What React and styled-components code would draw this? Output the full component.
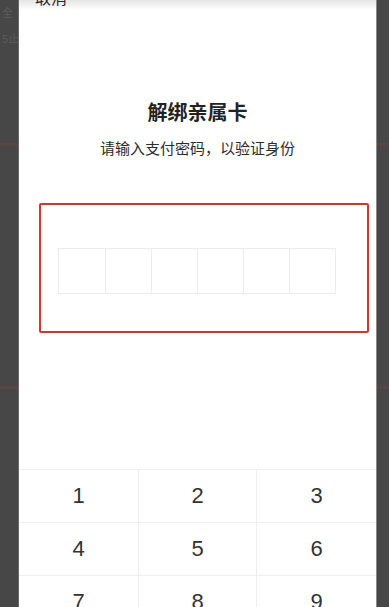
import React from 'react'
import styled, { createGlobalStyle } from 'styled-components'

const GlobalStyle = createGlobalStyle`
  html, body {
    margin: 0;
    padding: 0;
    height: 607px;
    overflow: hidden;
    background: #474747;
    font-family: "Noto Sans CJK SC", "Noto Sans", sans-serif;
  }
`;

const KEYS = ['1', '2', '3', '4', '5', '6', '7', '8', '9'];

const App = () => {
  return (
    <>
      <GlobalStyle />
      <Screen>
        {/* the page under the dimmed overlay */}
        <BackPage>
          <BackLine $top={5}>全</BackLine>
          <BackLine $top={12}>5止</BackLine>
          <RedRule $top={98} />
          <RedRule $top={240} />
        </BackPage>

        <Sheet>
          <Header>
            <Cancel>取消</Cancel>
          </Header>
          <Title>解绑亲属卡</Title>
          <Subtitle>请输入支付密码，以验证身份</Subtitle>

          <Highlight>
            <Cells>
              {Array.from({ length: 6 }).map((_, i) => (
                <Cell key={i} />
              ))}
            </Cells>
          </Highlight>

          <Keypad>
            {KEYS.map(k => (
              <Key key={k}>{k}</Key>
            ))}
          </Keypad>
        </Sheet>
      </Screen>
    </>
  )
}

export default App;

const Screen = styled.div`
  position: relative;
  width: 389px;
  height: 607px;
  overflow: hidden;
  background: #474747;
`;

const BackPage = styled.div`
  display: flex;
  flex-direction: column;
`;

const BackLine = styled.div`
  margin-top: ${p => p.$top}px;
  padding-left: 2px;
  font-size: 11px;
  line-height: 14px;
  color: #5c5c5c;
  white-space: nowrap;
`;

const RedRule = styled.div`
  margin-top: ${p => p.$top}px;
  height: 3px;
  background: #5b4444;
`;

const Sheet = styled.div`
  position: absolute;
  top: -16px;
  left: 19px;
  width: 357px;
  bottom: -60px;
  background: #fff;
  display: flex;
  flex-direction: column;
  box-shadow: 1px 0 0 #8a8a8a, -1px 0 0 #6a6a6a;
`;

const Header = styled.div`
  height: 26px;
  display: flex;
  align-items: center;
  padding-left: 16px;
  background: linear-gradient(#ffffff 0%, #ffffff 40%, #e4e4e4 60%, #ffffff 100%);
`;

const Cancel = styled.span`
  font-size: 16px;
  line-height: 20px;
  color: #2a2a2a;
`;

const Title = styled.h1`
  margin: 88px 0 0;
  text-align: center;
  font-size: 20px;
  line-height: 28px;
  font-weight: 600;
  color: #222;
`;

const Subtitle = styled.p`
  margin: 12px 0 0;
  text-align: center;
  font-size: 15px;
  line-height: 20px;
  color: #2c2c2c;
`;

const Highlight = styled.div`
  margin: 45px 7px 0 20px;
  height: 130px;
  box-sizing: border-box;
  border: 2px solid #d8332c;
  border-radius: 2px;
  padding: 43px 32px 0 18px;
  display: flex;
  justify-content: center;
  align-items: flex-start;
`;

const Cells = styled.div`
  display: grid;
  grid-template-columns: repeat(6, 46px);
  height: 46px;
  border: 1px solid #ececec;
  box-sizing: border-box;
`;

const Cell = styled.div`
  border-left: 1px solid #ececec;
  &:first-child {
    border-left: none;
  }
`;

const Keypad = styled.div`
  margin-top: 136px;
  display: grid;
  grid-template-columns: 120px 118px 119px;
  grid-auto-rows: 53px;
  border-top: 1px solid #efefef;
`;

const Key = styled.div`
  display: flex;
  align-items: center;
  justify-content: center;
  font-family: "Liberation Sans", Arial, sans-serif;
  font-size: 22px;
  color: #333;
  border-bottom: 1px solid #efefef;
  border-right: 1px solid #efefef;
  &:nth-child(3n) {
    border-right: none;
  }
`;
